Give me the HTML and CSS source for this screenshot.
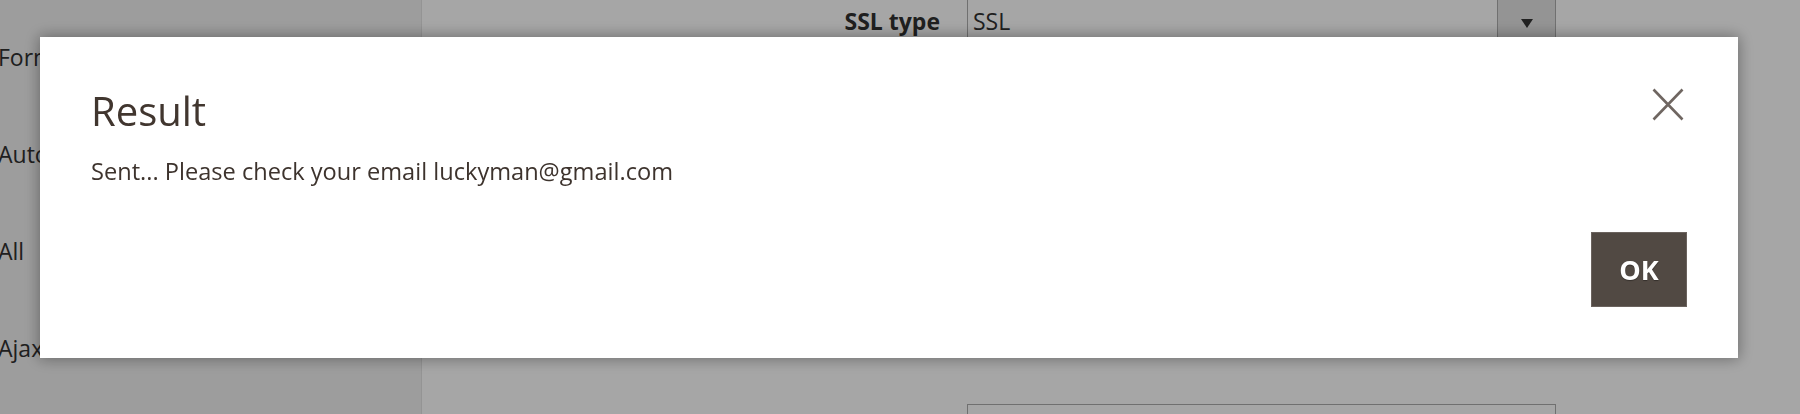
FILE: index.html
```html
<!DOCTYPE html>
<html lang="en">
<head>
    <meta charset="UTF-8">
    <meta name="viewport" content="width=device-width, initial-scale=1.0">
    <title>SMTP Settings</title>
    <link rel="stylesheet" href="styles.css">
</head>
<body>
    <div class="page">
        <!-- left side menu -->
        <div class="sidebar">
            <div class="side-item">Form Key</div>
            <div class="side-item">Auto Send</div>
            <div class="side-item">All</div>
            <div class="side-item">Ajax Mode</div>
        </div>

        <div class="content">
            <div class="field-row">
                <label class="field-label">SSL type</label>
                <div class="select-box">
                    <span class="select-value">SSL</span>
                    <span class="select-arrow"></span>
                </div>
            </div>
            <div class="field-row">
                <label class="field-label">Host</label>
                <div class="input-box"></div>
            </div>
            <div class="field-row">
                <label class="field-label">Port</label>
                <div class="input-box"></div>
            </div>
            <div class="field-row">
                <label class="field-label">Username</label>
                <div class="input-box"></div>
            </div>
            <div class="field-row">
                <label class="field-label"></label>
                <div class="input-box"></div>
            </div>
        </div>
    </div>

    <!-- popup shown after test email -->
    <div class="overlay"></div>
    <div class="modal">
        <button class="modal-close" aria-label="Close">
            <svg width="32" height="33" viewBox="0 0 32 33">
                <path d="M1.5 1.5 L30.5 31.5 M30.5 1.5 L1.5 31.5" stroke="#6f6661" stroke-width="2.6" fill="none"/>
            </svg>
        </button>
        <h1 class="modal-title">Result</h1>
        <div class="modal-text">Sent... Please check your email luckyman@gmail.com</div>
        <div class="modal-footer">
            <button class="ok-button">OK</button>
        </div>
    </div>
</body>
</html>
```

FILE: styles.css
```css
body {
    margin: 0;
    height: 414px;
    overflow: hidden;
    font-family: "Open Sans", "Liberation Sans", sans-serif;
    color: #303030;
    background-color: #fff;
}

.page {
    display: grid;
    grid-template-columns: 422px 1fr;
    height: 414px;
    overflow: hidden;
}

.sidebar {
    background-color: #f1f1f1;
    border-right: 1px solid #e3e3e3;
    padding-top: 9px;
    margin-left: -2px;
}

.side-item {
    height: 97px;
    line-height: 97px;
    font-size: 23px;
    white-space: nowrap;
}

/* form fields */
.content {
    display: flex;
    flex-direction: column;
    gap: 53.75px;
    margin-top: -3px;
}

.field-row {
    display: grid;
    grid-template-columns: 545px 589px;
    align-items: center;
}

.field-label {
    text-align: right;
    padding-right: 27px;
    font-size: 23px;
    font-weight: bold;
}

.select-box, .input-box {
    height: 48px;
    box-sizing: border-box;
    border: 1px solid #adadad;
    background-color: #fff;
}

.select-box {
    display: flex;
    align-items: center;
    justify-content: space-between;
}

.select-value {
    font-size: 23px;
    padding-left: 5px;
}

.select-arrow {
    width: 57px;
    height: 100%;
    border-left: 1px solid #adadad;
    background-color: #e3e3e3;
    position: relative;
}

.select-arrow::after {
    content: "";
    position: absolute;
    left: 23px;
    top: 21px;
    border-left: 6.5px solid transparent;
    border-right: 6.5px solid transparent;
    border-top: 9px solid #333;
}

/* modal */
.overlay {
    position: fixed;
    inset: 0;
    background-color: rgba(0, 0, 0, 0.35);
}

.modal {
    position: fixed;
    left: 40px;
    top: 37px;
    width: 1698px;
    height: 321px;
    box-sizing: border-box;
    padding: 50px 51px 51px 51px;
    background-color: #fff;
    box-shadow: 0 0 14px 1px rgba(0, 0, 0, 0.35);
}

.modal-close {
    position: absolute;
    top: 51px;
    right: 54px;
    width: 32px;
    height: 33px;
    padding: 0;
    border: none;
    background: none;
    cursor: pointer;
}

.modal-close svg {
    display: block;
}

.modal-title {
    margin: 0;
    font-size: 40px;
    line-height: 48px;
    font-weight: normal;
    color: #41362f;
}

.modal-text {
    margin-top: 21px;
    font-size: 23.6px;
    line-height: 31px;
    color: #3d332d;
}

.modal-footer {
    display: flex;
    justify-content: flex-end;
    margin-top: 45px;
}

.ok-button {
    width: 96px;
    height: 75px;
    background-color: #514943;
    border: 1px solid #6b635e;
    color: #fff;
    font-family: "Open Sans", "Liberation Sans", sans-serif;
    font-size: 27px;
    font-weight: bold;
    text-shadow: 0 1px 1px rgba(0, 0, 0, 0.35);
    cursor: pointer;
}
```
